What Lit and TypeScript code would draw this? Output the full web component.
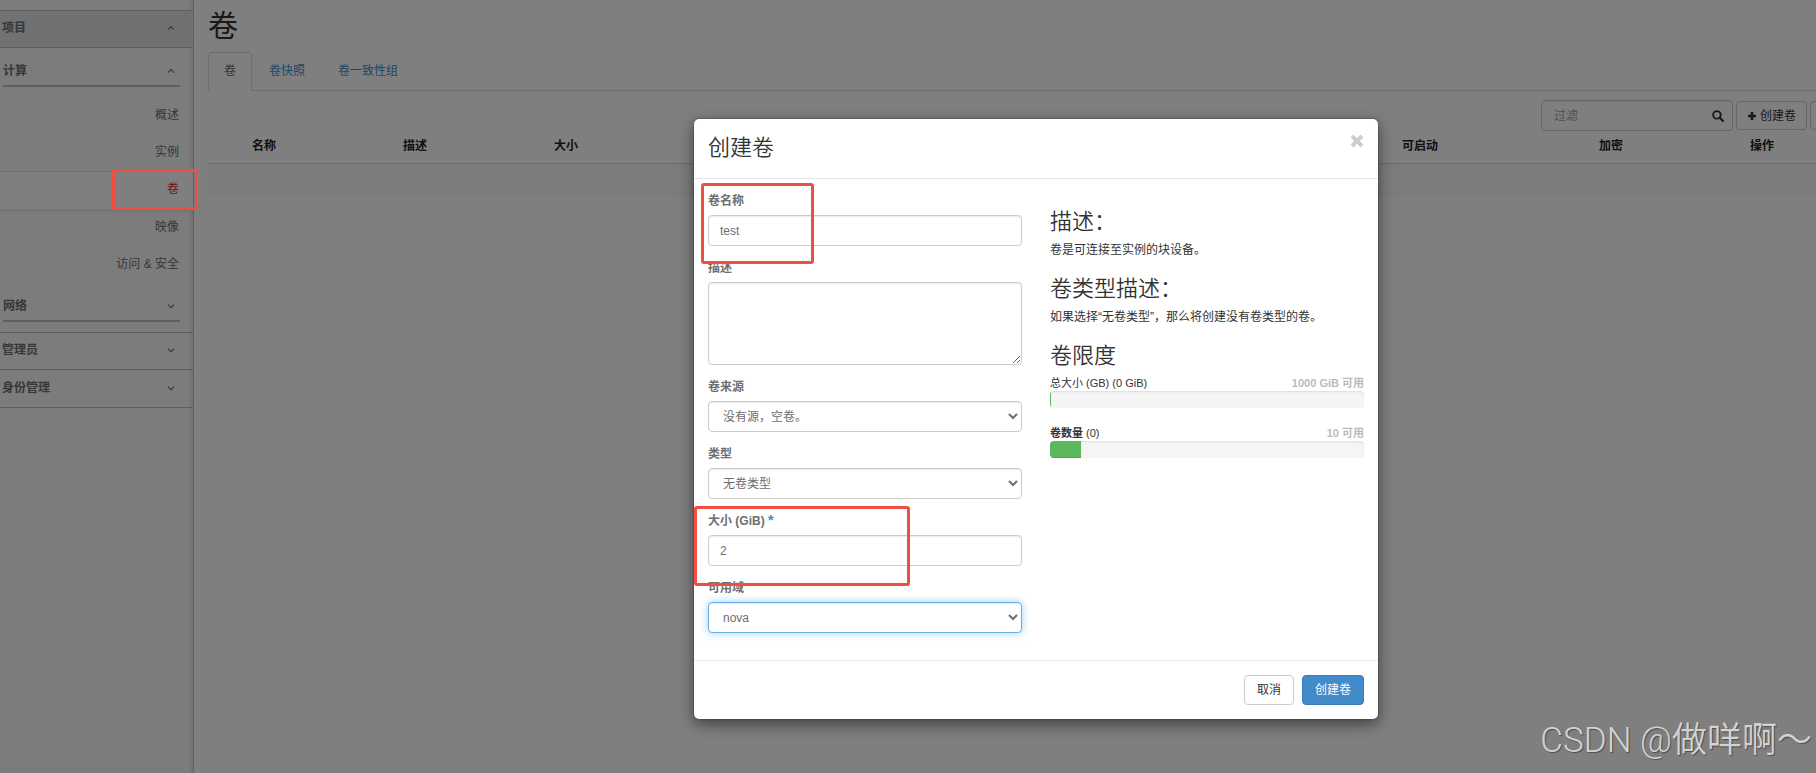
import { LitElement, html, css, svg } from "lit";
import { customElement, property } from "lit/decorators.js";

const chevron = (up: boolean) => html`<svg class="chevron" viewBox="0 0 8 8" aria-hidden="true">
  ${up
    ? svg`<path d="M1 5.6 4 2.6 7 5.6" fill="none" stroke="currentColor" stroke-width="1.1" />`
    : svg`<path d="M1 2.6 4 5.6 7 2.6" fill="none" stroke="currentColor" stroke-width="1.1" />`}
</svg>`;

@customElement("side-nav")
export class SideNav extends LitElement {
  static styles = css`
    :host {
      display: block;
      box-sizing: border-box;
      flex: 0 0 194px;
      padding-top: 10px;
      background: #f9f9f9;
      border-right: 1px solid #c2c2c2;
      box-shadow: inset -4px 0 5px -3px rgba(0, 0, 0, 0.16);
      color: #6e6e6e;
    }
    button {
      font: inherit;
      color: inherit;
      background: none;
      border: 0;
      margin: 0;
      text-align: left;
    }
    .dashboard,
    .group {
      display: flex;
      align-items: center;
      justify-content: space-between;
      box-sizing: border-box;
      font-weight: 700;
    }
    .dashboard {
      width: 100%;
      height: 37px;
      padding: 0 18px 2px 2px;
      border-top: 1px solid #bdbdbd;
    }
    .dashboard.open {
      height: 38px;
      background: #dfe2e6;
      border-bottom: 1px solid #bdbdbd;
    }
    .dashboard.last {
      height: 39px;
      border-bottom: 1px solid #bdbdbd;
    }
    .group {
      width: 177px;
      height: 32px;
      margin-left: 3px;
      padding: 2px 5px 0 0;
      border-bottom: 2px solid #bdbdbd;
    }
    .panels {
      padding: 7px 0 10px;
    }
    .links {
      list-style: none;
      margin: 0;
      padding: 10px 0 7px;
    }
    .link {
      display: block;
      box-sizing: border-box;
      height: 37px;
      padding-right: 14px;
      line-height: 36px;
      text-align: right;
      text-decoration: none;
      color: #6e6e6e;
    }
    .link.active {
      height: 38px;
      line-height: 34px;
      color: #d12b1f;
      background: #fff;
      border-top: 1px solid #e0e0e0;
      box-shadow: 0 2px 4px rgba(0, 0, 0, 0.1);
    }
    .chevron {
      width: 8px;
      height: 8px;
    }
  `;

  private links = ["概述", "实例", "卷", "映像", "访问 & 安全"];

  render() {
    return html`
      <button class="dashboard open">项目 ${chevron(true)}</button>
      <div class="panels">
        <button class="group">计算 ${chevron(true)}</button>
        <ul class="links">
          ${this.links.map(
            (l) => html`<li><a class="link ${l === "卷" ? "active" : ""}" href="#">${l}</a></li>`
          )}
        </ul>
        <button class="group">网络 ${chevron(false)}</button>
      </div>
      <button class="dashboard">管理员 ${chevron(false)}</button>
      <button class="dashboard last">身份管理 ${chevron(false)}</button>
    `;
  }
}

@customElement("volume-page")
export class VolumePage extends LitElement {
  static styles = css`
    :host {
      display: block;
      flex: 1;
      min-width: 0;
      padding: 7px 16px 0 14px;
      color: #333;
    }
    h1 {
      margin: 0 0 7px;
      font-size: 30px;
      line-height: 38px;
      font-weight: 400;
    }
    .tabs {
      display: flex;
      gap: 1px;
      border-bottom: 1px solid #ddd;
    }
    .tab {
      padding: 0 15px 2px;
      border: 1px solid transparent;
      border-bottom: 0;
      border-radius: 4px 4px 0 0;
      margin-bottom: -1px;
      line-height: 36px;
      color: #428bca;
      text-decoration: none;
    }
    .tab.active {
      color: #666;
      background: #fff;
      border-color: #ddd;
    }
    .toolbar {
      display: flex;
      justify-content: flex-end;
      align-items: center;
      gap: 3px;
      margin-top: 9px;
    }
    .filter {
      display: flex;
      align-items: center;
      box-sizing: border-box;
      width: 192px;
      height: 31px;
      padding: 0 8px 0 12px;
      border: 1px solid #ccc;
      border-radius: 4px;
      box-shadow: inset 0 1px 1px rgba(0, 0, 0, 0.08);
    }
    .filter input {
      flex: 1;
      min-width: 0;
      padding: 0;
      border: 0;
      outline: 0;
      background: none;
      font: inherit;
    }
    .filter input::placeholder {
      color: #a0a0a0;
    }
    .filter svg {
      width: 12px;
      height: 12px;
    }
    .btn {
      display: flex;
      align-items: center;
      gap: 3px;
      box-sizing: border-box;
      height: 29px;
      padding: 0 10px;
      border: 1px solid #ccc;
      border-radius: 4px;
      background: #fff;
      color: #333;
      font: inherit;
    }
    .btn svg {
      width: 10px;
      height: 10px;
    }
    .btn.wide {
      width: 246px;
    }
    table {
      width: 100%;
      table-layout: fixed;
      border-collapse: collapse;
    }
    th {
      padding: 6px 8px 8px;
      line-height: 18px;
      text-align: left;
      font-weight: 700;
      color: #222;
      border-bottom: 1px solid #ddd;
    }
    td {
      height: 32px;
      padding: 0;
      background: #f9f9f9;
      border-bottom: 1px solid #fbfbfb;
    }
    .c-check {
      width: 36px;
    }
    .c-std {
      width: 151px;
    }
    .c-boot {
      width: 197px;
    }
    .c-act {
      width: 314px;
    }
  `;

  render() {
    return html`
      <h1>卷</h1>
      <nav class="tabs">
        <a class="tab active" href="#">卷</a>
        <a class="tab" href="#">卷快照</a>
        <a class="tab" href="#">卷一致性组</a>
      </nav>
      <div class="toolbar">
        <label class="filter">
          <input type="text" placeholder="过滤" aria-label="过滤" />
          <svg viewBox="0 0 12 12" aria-hidden="true">
            <circle cx="4.9" cy="4.9" r="3.8" fill="none" stroke="currentColor" stroke-width="1.8" />
            <path d="M7.8 7.8 11 11" stroke="currentColor" stroke-width="2.2" stroke-linecap="round" />
          </svg>
        </label>
        <button class="btn">
          <svg viewBox="0 0 10 10" aria-hidden="true">
            <path d="M3.7 1h2.6v2.7H9v2.6H6.3V9H3.7V6.3H1V3.7h2.7z" fill="currentColor" />
          </svg>
          创建卷
        </button>
        <button class="btn wide"></button>
      </div>
      <table>
        <colgroup>
          <col class="c-check" />
          <col class="c-std" />
          <col class="c-std" />
          <col class="c-std" />
          <col />
          <col class="c-boot" />
          <col class="c-std" />
          <col class="c-act" />
        </colgroup>
        <thead>
          <tr>
            <th></th>
            <th>名称</th>
            <th>描述</th>
            <th>大小</th>
            <th></th>
            <th>可启动</th>
            <th>加密</th>
            <th>操作</th>
          </tr>
        </thead>
        <tbody>
          <tr>
            <td colspan="8"></td>
          </tr>
        </tbody>
      </table>
    `;
  }
}

@customElement("quota-bar")
export class QuotaBar extends LitElement {
  @property() name = "";
  @property() used = "";
  @property() left = "";
  @property({ type: Number }) percent = 0;
  @property({ type: Boolean }) strong = false;

  static styles = css`
    :host {
      display: block;
      margin-bottom: 17px;
      font-size: 11px;
      line-height: 16px;
    }
    .caption {
      display: flex;
      justify-content: space-between;
    }
    .strong {
      font-weight: 700;
    }
    .left {
      color: #bbb;
      font-weight: 700;
    }
    .track {
      height: 17px;
      overflow: hidden;
      background: #f5f5f5;
      border-radius: 4px;
      box-shadow: inset 0 1px 2px rgba(0, 0, 0, 0.1);
    }
    .fill {
      height: 100%;
      min-width: 1px;
      background: #5cb85c;
      box-shadow: inset 0 -1px 0 rgba(0, 0, 0, 0.15);
    }
  `;

  render() {
    return html`
      <div class="caption">
        <span><span class=${this.strong ? "strong" : ""}>${this.name}</span> ${this.used}</span>
        <span class="left">${this.left}</span>
      </div>
      <div class="track"><div class="fill" style="width:${this.percent}%"></div></div>
    `;
  }
}

@customElement("create-volume-dialog")
export class CreateVolumeDialog extends LitElement {
  static styles = css`
    :host {
      display: block;
      position: relative;
      box-sizing: border-box;
      width: 684px;
      background: #fff;
      border-radius: 5px;
      box-shadow: 0 5px 15px rgba(0, 0, 0, 0.5), 0 0 2px rgba(0, 0, 0, 0.5);
      color: #333;
    }
    header {
      display: flex;
      justify-content: space-between;
      align-items: flex-start;
      padding: 14px 14px 15px;
      border-bottom: 1px solid #e5e5e5;
    }
    h2,
    h3 {
      margin: 0;
      font-size: 22px;
      font-weight: 350;
    }
    h2 {
      line-height: 30px;
    }
    .close {
      display: block;
      margin: 1px 0 0;
      padding: 0;
      border: 0;
      background: none;
      color: #ccc;
    }
    .close svg {
      display: block;
      width: 14px;
      height: 14px;
    }
    .body {
      display: grid;
      grid-template-columns: 1fr 1fr;
      column-gap: 28px;
      padding: 13px 14px 14px;
      border-bottom: 1px solid #e5e5e5;
    }
    .field {
      margin-bottom: 13px;
    }
    .field label {
      display: block;
      margin-bottom: 5px;
      line-height: 18px;
      font-weight: 700;
      color: #6e6e6e;
    }
    .required {
      color: #428bca;
      font-size: 14px;
      line-height: 12px;
    }
    .control {
      display: block;
      box-sizing: border-box;
      width: 100%;
      height: 31px;
      margin: 0;
      padding: 5px 11px;
      border: 1px solid #ccc;
      border-radius: 4px;
      background: #fff;
      box-shadow: inset 0 1px 1px rgba(0, 0, 0, 0.08);
      color: #6e6e6e;
      font: inherit;
      outline: 0;
    }
    select.control {
      padding: 5px 10px;
    }
    textarea.control {
      height: 83px;
    }
    .control.focused {
      border-color: #66afe9;
      box-shadow: inset 0 1px 1px rgba(0, 0, 0, 0.08), 0 0 8px rgba(102, 175, 233, 0.6);
    }
    .help {
      padding-top: 18px;
    }
    h3 {
      line-height: 24px;
      margin-bottom: 7px;
    }
    p {
      margin: 0 0 18px;
      line-height: 18px;
    }
    footer {
      display: flex;
      justify-content: flex-end;
      gap: 8px;
      padding: 14px;
    }
    .btn {
      box-sizing: border-box;
      height: 30px;
      padding: 0 12px;
      border: 1px solid #ccc;
      border-radius: 4px;
      background: #fff;
      color: #333;
      font: inherit;
    }
    .btn.primary {
      background: #428bca;
      border-color: #357ebd;
      color: #fff;
    }
    .mark {
      position: absolute;
      box-sizing: border-box;
      border: 3px solid #f04e42;
      border-radius: 3px;
      pointer-events: none;
    }
    .mark.name {
      left: 7px;
      top: 64px;
      width: 113px;
      height: 81px;
    }
    .mark.size {
      left: 0;
      top: 387px;
      width: 216px;
      height: 80px;
    }
  `;

  render() {
    return html`
      <header>
        <h2>创建卷</h2>
        <button class="close" aria-label="关闭">
          <svg viewBox="0 0 14 14"><path d="M3.4 3.4l7.2 7.2M10.6 3.4l-7.2 7.2" stroke="currentColor" stroke-width="4" stroke-linecap="square" /></svg>
        </button>
      </header>
      <div class="body">
        <form>
          <div class="field">
            <label for="name">卷名称</label>
            <input class="control" id="name" type="text" value="test" />
          </div>
          <div class="field">
            <label for="desc">描述</label>
            <textarea class="control" id="desc"></textarea>
          </div>
          <div class="field">
            <label for="source">卷来源</label>
            <select class="control" id="source"><option>没有源，空卷。</option></select>
          </div>
          <div class="field">
            <label for="type">类型</label>
            <select class="control" id="type"><option>无卷类型</option></select>
          </div>
          <div class="field">
            <label for="size">大小 (GiB) <span class="required">*</span></label>
            <input class="control" id="size" type="text" value="2" />
          </div>
          <div class="field">
            <label for="zone">可用域</label>
            <select class="control focused" id="zone"><option>nova</option></select>
          </div>
        </form>
        <div class="help">
          <h3>描述：</h3>
          <p>卷是可连接至实例的块设备。</p>
          <h3>卷类型描述：</h3>
          <p>如果选择“无卷类型”，那么将创建没有卷类型的卷。</p>
          <h3>卷限度</h3>
          <quota-bar name="总大小" used="(GB) (0 GiB)" left="1000 GiB 可用" percent="0"></quota-bar>
          <quota-bar name="卷数量" used="(0)" left="10 可用" percent="10" strong></quota-bar>
        </div>
      </div>
      <footer>
        <button class="btn">取消</button>
        <button class="btn primary">创建卷</button>
      </footer>
      <div class="mark name"></div>
      <div class="mark size"></div>
    `;
  }
}

@customElement("app-root")
export class AppRoot extends LitElement {
  static styles = css`
    :host {
      display: block;
      position: relative;
      overflow: hidden;
      min-height: 100vh;
      background: #fff;
      font-family: "Liberation Sans", "Noto Sans CJK SC", sans-serif;
      font-size: 12px;
      line-height: 18px;
    }
    /* The workspace is wider than the window and runs off its right edge. */
    .workspace {
      display: flex;
      width: calc(100% + 256px);
      min-height: 100vh;
    }
    .backdrop {
      position: absolute;
      top: 0;
      left: 0;
      display: flex;
      justify-content: center;
      align-items: flex-start;
      box-sizing: border-box;
      width: calc(100% + 256px);
      min-height: 100%;
      padding-top: 119px;
      background: rgba(0, 0, 0, 0.5);
    }
    .mark {
      position: absolute;
      left: 112px;
      top: 169px;
      box-sizing: border-box;
      width: 86px;
      height: 41px;
      border: 3px solid #f04e42;
      border-radius: 3px;
      pointer-events: none;
    }
    .watermark {
      position: absolute;
      right: 4px;
      bottom: 8px;
      color: #d2d2d2;
      font-family: Roboto, "Noto Sans CJK SC", sans-serif;
      font-size: 35px;
      line-height: 48px;
      font-weight: 350;
      text-shadow: 1px 1px 1px rgba(0, 0, 0, 0.4);
    }
  `;

  render() {
    return html`
      <div class="workspace">
        <side-nav></side-nav>
        <volume-page></volume-page>
      </div>
      <div class="backdrop"><create-volume-dialog></create-volume-dialog></div>
      <div class="mark"></div>
      <div class="watermark">CSDN @做咩啊～</div>
    `;
  }
}
